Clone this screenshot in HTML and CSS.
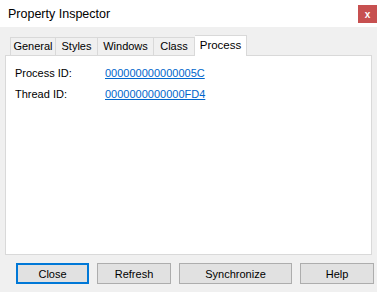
FILE: index.html
```html
<!DOCTYPE html>
<html lang="en">
<head>
    <meta charset="UTF-8">
    <title>Property Inspector</title>
    <link rel="stylesheet" href="styles.css">
</head>
<body>
    <div class="titlebar">
        <span class="title">Property Inspector</span>
        <span class="close-x">x</span>
    </div>

    <div class="tabs">
        <div class="tab">General</div>
        <div class="tab">Styles</div>
        <div class="tab">Windows</div>
        <div class="tab">Class</div>
        <div class="tab active">Process</div>
    </div>

    <div class="panel">
        <div class="row">
            <span class="label">Process ID:</span>
            <a class="value" href="#">000000000000005C</a>
        </div>
        <div class="row">
            <span class="label">Thread ID:</span>
            <a class="value" href="#">0000000000000FD4</a>
        </div>
    </div>

    <div class="buttons">
        <button class="btn focused w-close">Close</button>
        <button class="btn w-refresh">Refresh</button>
        <button class="btn w-sync">Synchronize</button>
        <button class="btn w-help">Help</button>
    </div>
</body>
</html>
```

FILE: styles.css
```css
body {
    margin: 0;
    background: #f0f0f0;
    font-family: "Liberation Sans", Arial, sans-serif;
    font-size: 11px;
    color: #000;
    width: 377px;
    height: 292px;
    overflow: hidden;
}

.titlebar {
    height: 27px;
    background: #fff;
    display: flex;
    align-items: flex-start;
    justify-content: space-between;
}

.title {
    font-size: 12.5px;
    margin: 7px 0 0 8px;
}

.close-x {
    width: 19px;
    height: 18px;
    margin-top: 5px;
    background: #c75050;
    color: #fff;
    font-size: 10px;
    font-weight: bold;
    display: flex;
    align-items: center;
    justify-content: center;
}

.tabs {
    display: flex;
    align-items: flex-end;
    margin: 9px 0 0 10px;
    height: 19px;
    position: relative;
    z-index: 1;
}

.tab {
    height: 18px;
    line-height: 17px;
    text-align: center;
    border: 1px solid #d9d9d9;
    border-bottom: none;
    border-right: none;
    background: #f0f0f0;
    box-sizing: border-box;
}

.tab:nth-child(1) { width: 45px; }
.tab:nth-child(2) { width: 42px; }
.tab:nth-child(3) { width: 56px; }
.tab:nth-child(4) { width: 42px; border-right: 1px solid #d9d9d9; }

.tab.active {
    background: #fff;
    height: 21px;
    width: 52px;
    margin-bottom: -1px;
    line-height: 18px;
    font-size: 11.5px;
    border: 1px solid #d9d9d9;
    border-bottom: none;
    border-left: none;
}

.panel {
    margin: 0 5px;
    height: 200px;
    background: #fff;
    border: 1px solid #d9d9d9;
    padding-top: 6px;
    box-sizing: border-box;
}

.row {
    display: flex;
    height: 21px;
    align-items: center;
}

.label {
    width: 90px;
    margin-left: 9px;
}

.value {
    color: #0066cc;
    text-decoration: underline;
}

.buttons {
    display: flex;
    gap: 8px;
    margin: 8px 0 0 16px;
}

.btn {
    height: 21px;
    background: #e1e1e1;
    border: 1px solid #adadad;
    font-family: "Liberation Sans", Arial, sans-serif;
    font-size: 11px;
    color: #000;
    padding: 0;
    box-sizing: border-box;
}

.btn.focused {
    border: 2px solid #0078d7;
}

.w-close { width: 73px; }
.w-refresh { width: 74px; }
.w-sync { width: 113px; }
.w-help { width: 74px; }
```
